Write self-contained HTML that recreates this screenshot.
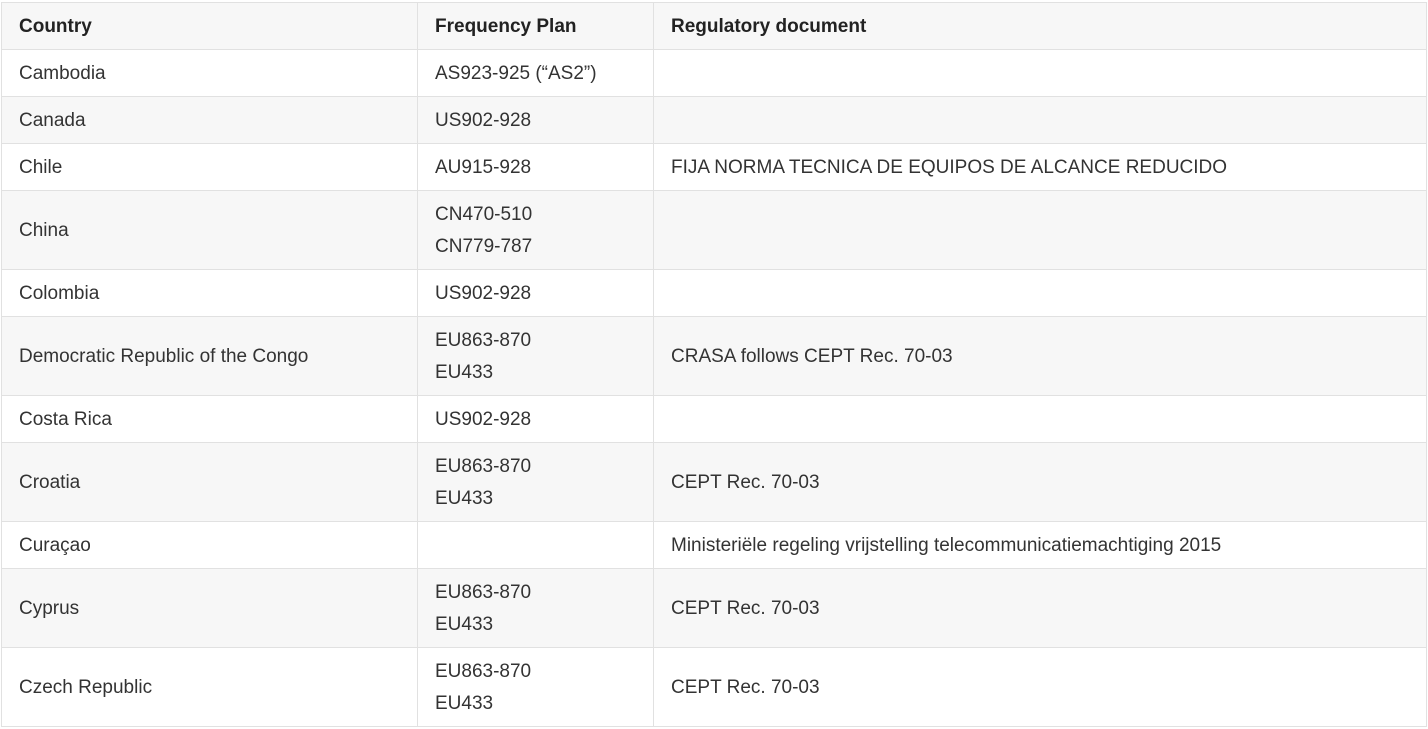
<!DOCTYPE html>
<html><head><meta charset="utf-8"><style>
body{margin:0;background:#fff;}
table{position:absolute;left:1px;top:2px;border-collapse:collapse;width:1426px;font-family:"Liberation Sans",Arial,sans-serif;font-size:19px;color:#333;table-layout:fixed}
td,th{border:1px solid #e1e1e1;padding:2px 0 0 17px;text-align:left;vertical-align:middle;line-height:32px}
th{font-weight:bold;color:#222;height:44px}
tr.s td{height:44px}
tr.d td{height:76px}
tr:nth-child(odd) td,tr:first-child th{background:#f7f7f7}
tr:nth-child(even) td{background:#fff}
</style></head><body>
<table>
<colgroup><col style="width:416px"><col style="width:236px"><col></colgroup>
<tr><th>Country</th><th>Frequency Plan</th><th>Regulatory document</th></tr>
<tr class="s"><td>Cambodia</td><td>AS923-925 (“AS2”)</td><td></td></tr>
<tr class="s"><td>Canada</td><td>US902-928</td><td></td></tr>
<tr class="s"><td>Chile</td><td>AU915-928</td><td>FIJA NORMA TECNICA DE EQUIPOS DE ALCANCE REDUCIDO</td></tr>
<tr class="d"><td>China</td><td>CN470-510<br>CN779-787</td><td></td></tr>
<tr class="s"><td>Colombia</td><td>US902-928</td><td></td></tr>
<tr class="d"><td>Democratic Republic of the Congo</td><td>EU863-870<br>EU433</td><td>CRASA follows CEPT Rec. 70-03</td></tr>
<tr class="s"><td>Costa Rica</td><td>US902-928</td><td></td></tr>
<tr class="d"><td>Croatia</td><td>EU863-870<br>EU433</td><td>CEPT Rec. 70-03</td></tr>
<tr class="s"><td>Curaçao</td><td></td><td>Ministeriële regeling vrijstelling telecommunicatiemachtiging 2015</td></tr>
<tr class="d"><td>Cyprus</td><td>EU863-870<br>EU433</td><td>CEPT Rec. 70-03</td></tr>
<tr class="d"><td>Czech Republic</td><td>EU863-870<br>EU433</td><td>CEPT Rec. 70-03</td></tr>
</table>
</body></html>
